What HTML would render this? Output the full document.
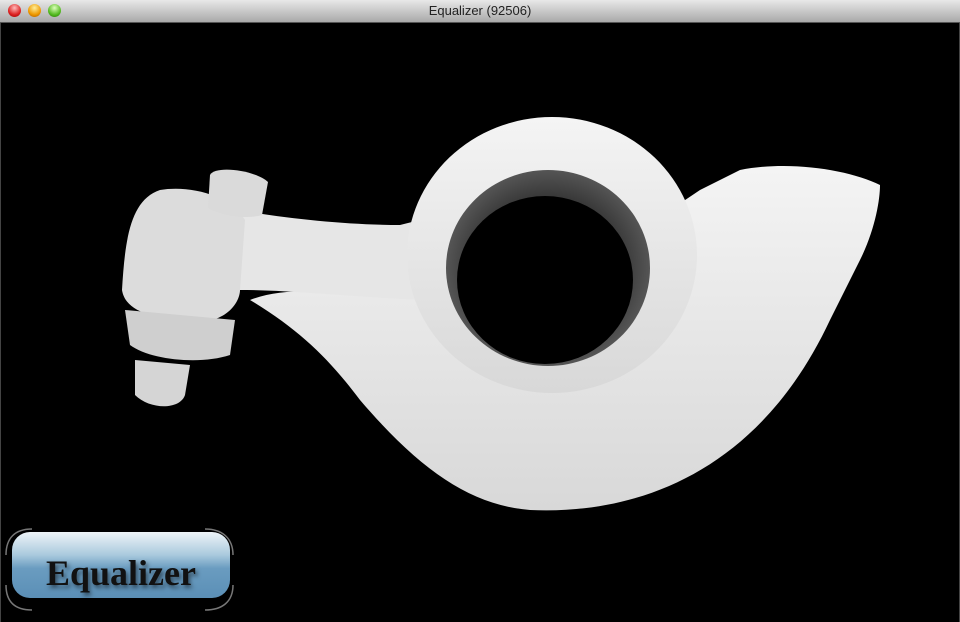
<!DOCTYPE html>
<html><head><style>
body{margin:0;width:960px;height:622px;overflow:hidden;background:#000;font-family:"Liberation Sans",sans-serif}
.tb{position:absolute;left:0;top:0;width:960px;height:22px;background:linear-gradient(#e8e8e8,#a9a9a9);border-bottom:1px solid #555;text-align:center;font-size:13px;line-height:22px;color:#222}
.dot{position:absolute;top:4px;width:13px;height:13px;border-radius:50%}
.c{position:absolute;left:0;top:23px;width:958px;height:599px;background:#000;border-left:1px solid #444;border-right:1px solid #444}
.logo{position:absolute;left:12px;top:532px;width:218px;height:66px;border-radius:18px;background:linear-gradient(#eef4f8 0%,#a9c9dd 35%,#6a9cc0 55%,#5b8fb6 100%);text-align:center;font-family:"Liberation Serif",serif;font-weight:bold;font-size:36px;line-height:82px;color:#111;text-shadow:2px 3px 4px rgba(0,0,0,.5)}
</style></head><body>
<div class="tb">Equalizer (92506)
<div class="dot" style="left:8px;background:radial-gradient(circle at 50% 30%,#fbb,#d22 60%,#900)"></div>
<div class="dot" style="left:28px;background:radial-gradient(circle at 50% 30%,#fe9,#e90 60%,#a50)"></div>
<div class="dot" style="left:48px;background:radial-gradient(circle at 50% 30%,#dfb,#5b2 60%,#270)"></div>
</div>
<div class="c"></div>
<svg style="position:absolute;left:0;top:0" width="960" height="622">
<defs>
<linearGradient id="g" x1="0" y1="0" x2="0" y2="1"><stop offset="0" stop-color="#f4f4f4"/><stop offset="1" stop-color="#d8d8d8"/></linearGradient>
<radialGradient id="h" cx="0.5" cy="0.5" r="0.5"><stop offset="0.6" stop-color="#2a2a2a"/><stop offset="1" stop-color="#555"/></radialGradient>
</defs>
<path d="M250 300 C300 330 330 360 360 400 C420 470 470 505 530 510 C640 515 760 470 830 320 L860 260 C875 230 880 200 880 185 C850 170 790 160 740 170 L700 190 C640 230 560 290 460 300 C380 300 300 280 250 300 Z" fill="url(#g)"/>
<path d="M170 195 C220 210 320 225 400 225 L440 215 L440 300 C380 300 300 290 240 290 L180 280 Z" fill="#e6e6e6"/>
<path d="M160 190 C130 200 125 240 122 290 C125 310 150 320 200 322 C230 320 240 300 240 290 L245 220 C230 195 190 185 160 190Z" fill="#dcdcdc"/>
<path d="M125 310 L130 345 C150 360 200 365 230 355 L235 320 Z" fill="#cfcfcf"/>
<path d="M135 360 L135 395 C150 410 180 410 185 395 L190 365 Z" fill="#d5d5d5"/>
<path d="M210 175 C215 165 255 170 268 182 L262 215 C245 220 220 215 208 208 Z" fill="#dadada"/>
<ellipse cx="552" cy="255" rx="145" ry="138" fill="url(#g)"/>
<ellipse cx="548" cy="268" rx="102" ry="98" fill="url(#h)"/>
<ellipse cx="545" cy="280" rx="88" ry="84" fill="#000"/>
<g fill="none" stroke="#777" stroke-width="1.5">
<path d="M32 529 C15 529 6 538 6 555"/><path d="M205 529 C222 529 233 538 233 555"/>
<path d="M6 585 C6 602 15 610 32 610"/><path d="M233 585 C233 602 222 610 205 610"/>
</g>
</svg>
<div class="logo">Equalizer</div>
</body></html>
